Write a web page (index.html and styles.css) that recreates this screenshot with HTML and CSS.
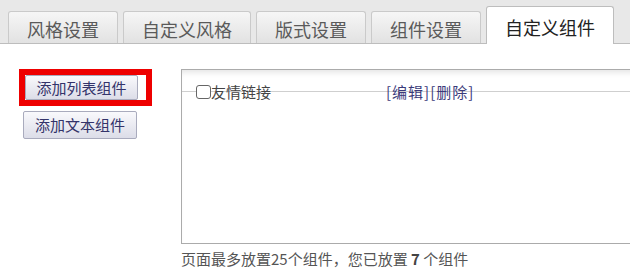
FILE: index.html
```html
<!DOCTYPE html>
<html lang="zh-CN">
<head>
    <meta charset="UTF-8">
    <title>自定义组件</title>
    <link rel="stylesheet" href="styles.css">
</head>
<body>
    <div class="tabs">
        <div class="tab">风格设置</div>
        <div class="tab">自定义风格</div>
        <div class="tab">版式设置</div>
        <div class="tab">组件设置</div>
        <div class="tab active">自定义组件</div>
    </div>

    <div class="content">
        <div class="side">
            <div class="mark">
                <button class="btn btn-first">添加列表组件</button>
            </div>
            <button class="btn btn-second">添加文本组件</button>
        </div>
        <div class="main">
            <div class="panel">
                <div class="row">
                    <span class="check"></span><span class="name">友情链接</span>
                    <span class="links"><a href="#">[编辑]</a><a href="#">[删除]</a></span>
                </div>
            </div>
            <p class="note">页面最多放置25个组件，您已放置 <b>7</b> 个组件</p>
        </div>
    </div>
</body>
</html>
```

FILE: styles.css
```css
body {
    margin: 0;
    overflow: hidden;
    font-family: "Noto Sans CJK SC", "Noto Sans", sans-serif;
    color: #555;
    background: #fff;
}
.tabs {
    display: flex;
    align-items: flex-end;
    gap: 5px;
    height: 43px;
    padding-left: 8px;
    background: #e8e8e8;
    border-bottom: 1px solid #bdbdbd;
}
.tab {
    padding: 3px 18px 0;
    line-height: 28px;
    font-size: 18px;
    color: #5a5a5a;
    border: 1px solid #cacaca;
    border-bottom: none;
    border-radius: 3px 3px 0 0;
    background: linear-gradient(#f6f6f6, #e2e2e2);
}
.tab.active {
    padding-top: 4px;
    line-height: 33px;
    margin-bottom: -1px;
    color: #222;
    background: #fff;
    border-color: #bdbdbd;
}
.content {
    display: flex;
    padding-top: 25px;
}
.side {
    flex: none;
    width: 162px;
    margin-left: 19px;
}
.mark {
    width: 121px;
    border: 6px solid #ee0000;
}
.btn {
    display: block;
    font-family: inherit;
    font-size: 15px;
    color: #33336a;
    padding: 0;
    border: 1px solid #a9abbd;
    border-radius: 2px;
    background: linear-gradient(#f9f9fc, #dcdde8);
}
.btn-first {
    width: 113px;
    height: 25px;
    line-height: 23px;
}
.btn-second {
    width: 114px;
    height: 28px;
    line-height: 26px;
    margin: 5px 0 0 4px;
}
.main {
    flex: none;
    width: 470px;
}
.panel {
    height: 173px;
    border: 1px solid #ababab;
    box-shadow: inset 0 6px 6px -4px rgba(0, 0, 0, 0.12);
}
.row {
    display: flex;
    align-items: center;
    margin-top: 12px;
    padding-left: 14px;
    height: 20px;
    font-size: 15px;
    color: #444;
    background: linear-gradient(transparent 9px, #cfcfcf 9px, #cfcfcf 10px, transparent 10px);
}
.check {
    width: 13px;
    height: 12px;
    border: 1px solid #666;
    border-radius: 3px;
    background: #fff;
}
.name {
    line-height: 20px;
}
.links {
    margin-left: 115px;
    line-height: 20px;
    letter-spacing: 1px;
}
.links a {
    color: #3a3a7a;
    text-decoration: none;
}
.note {
    margin: 5px 0 0;
    font-size: 15px;
    line-height: 20px;
    color: #555;
}
.note b {
    color: #444;
}
```
